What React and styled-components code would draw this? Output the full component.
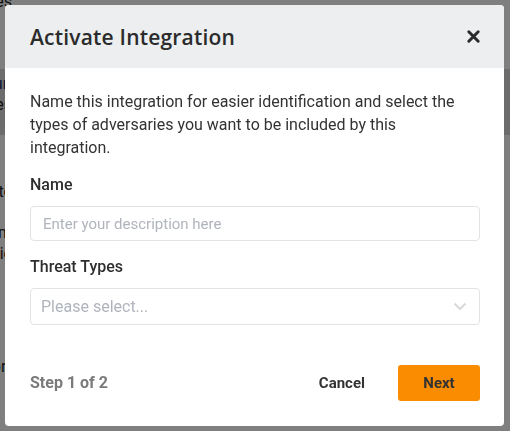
import React from "react";
import styled, { createGlobalStyle } from "styled-components";

const GlobalStyle = createGlobalStyle`
    html, body {
        margin: 0;
        padding: 0;
        width: 510px;
        height: 431px;
        overflow: hidden;
        font-family: 'Roboto', 'Liberation Sans', sans-serif;
    }
    * {
        box-sizing: border-box;
    }
`

export default function App() {
    return (
        <>
            <GlobalStyle />
            <Page>
                <BgLine style={{ marginTop: -9 }}>Indicators of a compromises</BgLine>
                <BgBand>
                    <BgLine $color="#1d2f6b">Accepted url</BgLine>
                    <BgLine>Hostnames</BgLine>
                </BgBand>
                <BgLine style={{ marginTop: 46 }}>Description of the threat etc</BgLine>
                <BgLine style={{ marginTop: 20 }}>Organization form</BgLine>
                <BgLine $color="#4a1a10">Custom logic</BgLine>
                <BgLine style={{ marginTop: 92 }}>Report</BgLine>
            </Page>
            <Overlay>
                <Modal>
                    <Header>
                        <Title>Activate Integration</Title>
                        <CloseButton aria-label="Close">
                            <svg width="15" height="15" viewBox="0 0 16 16">
                                <path d="M3 3 L13 13 M13 3 L3 13" stroke="#2a2a2a" strokeWidth="3.2" strokeLinecap="round" />
                            </svg>
                        </CloseButton>
                    </Header>
                    <Body>
                        <Intro>
                            Name this integration for easier identification and select the types of adversaries you want to be included by this integration.
                        </Intro>
                        <Field>
                            <Label>Name</Label>
                            <TextInput placeholder="Enter your description here" />
                        </Field>
                        <Field>
                            <Label>Threat Types</Label>
                            <Select>
                                <span>Please select...</span>
                                <svg width="14" height="9" viewBox="0 0 14 9">
                                    <path d="M1.5 1.5 L7 7 L12.5 1.5" fill="none" stroke="#d9d9d9" strokeWidth="2" />
                                </svg>
                            </Select>
                        </Field>
                    </Body>
                    <Footer>
                        <Step>Step 1 of 2</Step>
                        <Actions>
                            <CancelButton>Cancel</CancelButton>
                            <NextButton>Next</NextButton>
                        </Actions>
                    </Footer>
                </Modal>
            </Overlay>
        </>
    )
}

const Page = styled.div`
    width: 510px;
    height: 431px;
    background-color: #ffffff;
    display: flex;
    flex-direction: column;
`

const BgBand = styled.div`
    margin-top: 57px;
    background-color: #d9d9d9;
    height: 66px;
    padding-top: 4px;
`

const BgLine = styled.div`
    font-size: 16px;
    line-height: 21px;
    color: ${props => props.$color || "#222222"};
    white-space: nowrap;
    width: 12px;
    direction: rtl;
    overflow: hidden;
`

const Overlay = styled.div`
    position: fixed;
    inset: 0;
    background-color: rgba(0, 0, 0, 0.5);
    padding: 5px 6px 5px 5px;
`

const Modal = styled.div`
    width: 499px;
    height: 421px;
    background-color: #ffffff;
    border-radius: 4px;
    overflow: hidden;
    display: flex;
    flex-direction: column;
`

const Header = styled.div`
    height: 63px;
    background-color: #eceef0;
    display: flex;
    align-items: center;
    justify-content: space-between;
    padding: 0 23px 0 25px;
`

const Title = styled.h1`
    margin: 0;
    font-family: 'Open Sans', 'Liberation Sans', sans-serif;
    font-weight: 600;
    font-size: 21px;
    color: #2b2b2b;
    letter-spacing: 0.2px;
`

const CloseButton = styled.button`
    border: none;
    background: none;
    padding: 0;
    display: flex;
    cursor: pointer;
`

const Body = styled.div`
    padding: 22px 24px 0 25px;
    display: flex;
    flex-direction: column;
`

const Intro = styled.p`
    margin: 0;
    font-size: 16px;
    line-height: 23px;
    color: #333333;
`

const Field = styled.div`
    margin-top: 16px;
    display: flex;
    flex-direction: column;
`

const Label = styled.label`
    font-size: 16px;
    font-weight: 500;
    color: #2e2e2e;
    line-height: 20px;
    margin-bottom: 11px;
`

const TextInput = styled.input`
    height: 35px;
    border: 1px solid #e3e3e3;
    border-radius: 4px;
    padding: 0 12px;
    font-family: 'Roboto', 'Liberation Sans', sans-serif;
    font-size: 15px;
    color: #333333;
    outline: none;

    &::placeholder {
        color: #b0b4bc;
    }
`

const Select = styled.div`
    height: 37px;
    border: 1px solid #e3e3e3;
    border-radius: 4px;
    padding: 0 12px 0 10px;
    display: flex;
    align-items: center;
    justify-content: space-between;
    font-size: 16px;
    color: #b0b4bc;
`

const Footer = styled.div`
    margin-top: auto;
    height: 87px;
    padding: 0 24px 0 25px;
    display: flex;
    align-items: center;
    justify-content: space-between;
`

const Step = styled.div`
    font-size: 16px;
    font-weight: 700;
    color: #7a7a7a;
`

const Actions = styled.div`
    display: flex;
    align-items: center;
    gap: 33px;
`

const CancelButton = styled.button`
    border: none;
    background: none;
    padding: 0;
    font-family: 'Roboto', 'Liberation Sans', sans-serif;
    font-size: 15px;
    font-weight: 700;
    color: #333333;
    cursor: pointer;
`

const NextButton = styled.button`
    width: 82px;
    height: 36px;
    border: none;
    border-radius: 3px;
    background-color: #f98c00;
    font-family: 'Roboto', 'Liberation Sans', sans-serif;
    font-size: 15px;
    font-weight: 700;
    color: #333333;
    cursor: pointer;
`
